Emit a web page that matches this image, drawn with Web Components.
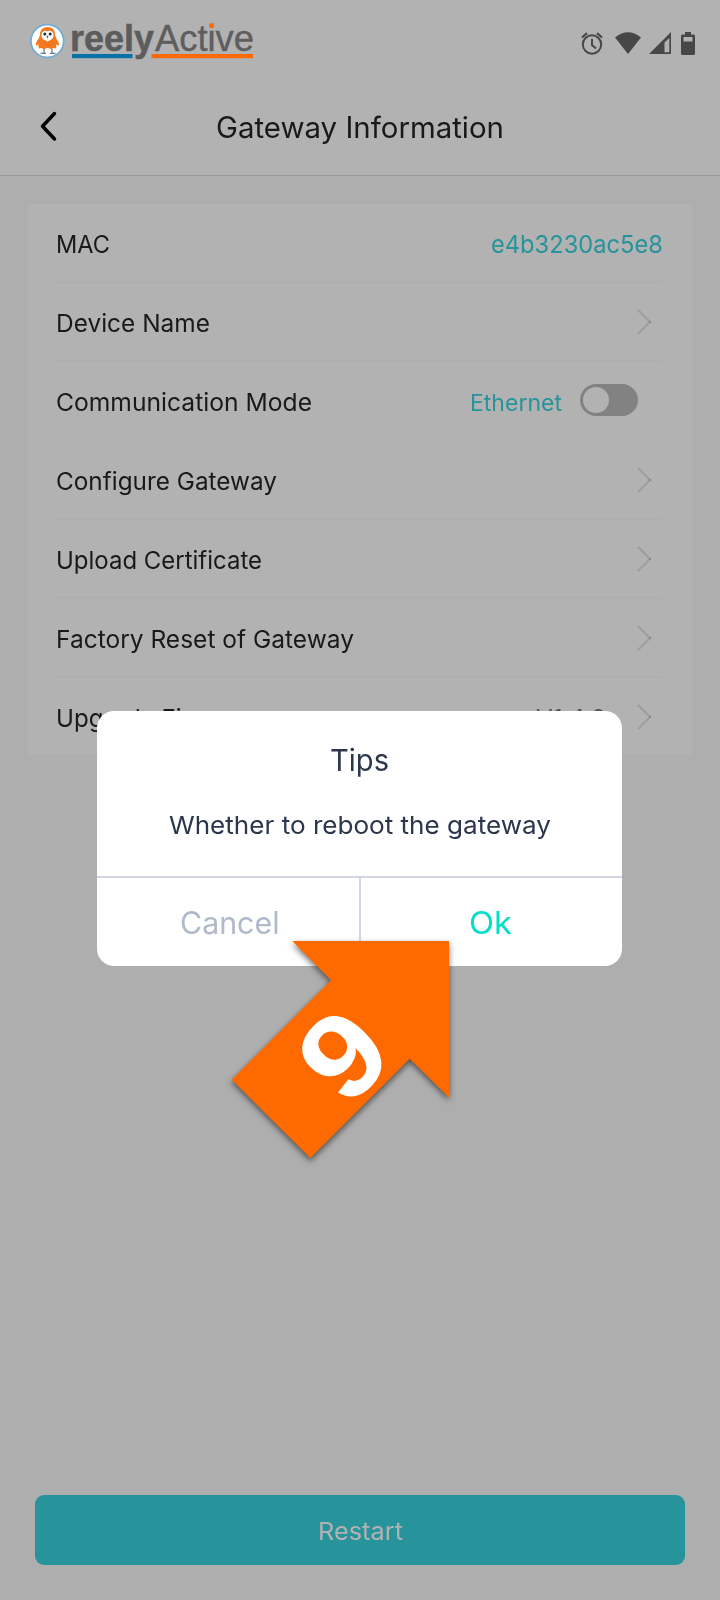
<!DOCTYPE html>
<html lang="en">
<head>
<meta charset="utf-8">
<title>Gateway Information</title>
<style>
html,body{margin:0;padding:0;background:#aeaeae}
body{font-family:Inter,"Open Sans",sans-serif;color:#191919}
</style>
</head>
<body>
<gateway-app></gateway-app>
<script>
const define = (name, html, init) => {
  const t = document.createElement('template');
  t.innerHTML = html;
  customElements.define(name, class extends HTMLElement {
    connectedCallback() {
      if (this.shadowRoot) return;
      this.attachShadow({mode: 'open'}).append(t.content.cloneNode(true));
      if (init) init.call(this, this.shadowRoot);
    }
  });
};

/* Text widened or narrowed so that its line is exactly "w" pixels wide. */
define('fit-text', `<style>:host{display:inline-block;white-space:nowrap;text-align:left;vertical-align:top}span{display:inline-block;transform-origin:0 50%}</style><span><slot></slot></span>`,
function (root) {
  const span = root.querySelector('span');
  const w = Number(this.getAttribute('w'));
  const natural = span.getBoundingClientRect().width;
  this.style.width = w + 'px';
  span.style.transform = 'scaleX(' + w / natural + ')';
  span.style.marginRight = w - natural + 'px';
});

define('brand-logo', `<style>:host{display:block}svg{display:block;overflow:visible}text{font-family:"Liberation Sans",Arial,sans-serif;font-size:36px}</style>
<svg width="230" height="50" viewBox="28 14 230 50">
  <circle cx="47.3" cy="41" r="16.4" fill="#fff" stroke="#73aed0" stroke-width="1.8"/>
  <path d="M40 35Q40 27 47.500 27T55 35L56.500 39Q59.500 43 59 45.500L56 44.500Q57 47 55.500 48.500L53 48L51 49L47.500 48L44 49L41.500 48L39 48.500Q38 46 38.500 44.500L36 45.500Q35.500 42 38.500 39Z" fill="#f4781f"/>
  <path d="M42.500 32Q45 30 47.500 31.500Q50 30 52.500 32Q55 36 51.500 39.500L47.500 41.500L43.500 39.500Q40 36 42.500 32Z" fill="#fff"/>
  <circle cx="44.800" cy="34" r="1.500" fill="#292929"/><circle cx="50.200" cy="34" r="1.500" fill="#292929"/>
  <path d="M46.500 35.800h2l-1 3.200z" fill="#665558"/>
  <path d="M44 48.500v4.500M52 48.500v4.500M40.500 53.300h5.500M50 53.300h5.500" stroke="#555" stroke-width="1" fill="none"/>
  <rect x="72" y="54" width="60.500" height="4.200" fill="#0872a8"/>
  <rect x="151.500" y="54" width="101.500" height="4.200" fill="#ff6a00"/>
  <text x="70" y="50.700" font-weight="700" fill="#5c5c5c" stroke="#5c5c5c" stroke-width=".5" textLength="84" lengthAdjust="spacingAndGlyphs">reely</text>
  <text x="155" y="50.700" fill="#5e5e5e" stroke="#5e5e5e" stroke-width=".4" textLength="99" lengthAdjust="spacingAndGlyphs">Active</text>
  <rect x="209.500" y="23.500" width="4.500" height="4.200" fill="#ff6a00"/>
</svg>`);

define('status-icons', `<style>:host{display:block}svg{display:block}</style>
<svg width="120" height="30" viewBox="578 28 120 30" fill="#474747">
  <g fill="none" stroke="#474747"><circle cx="592" cy="44.500" r="9.200" stroke-width="2"/><path d="M592 39v6l4 3.500" stroke-width="2"/><path d="M582 37.500l5-4.300M602 37.500l-5-4.300" stroke-width="2.200"/></g>
  <path d="M615 37.500Q628 27 641 37.500L628 54Z"/>
  <path d="M649 54L671 32V54Z"/><path d="M664.500 42.500L669.300 38V52.300H664.500Z" fill="#b2b2b2"/>
  <path d="M681 36q0-1.500 1.500-1.500h2.500V32h6v2.500h2.500q1.500 0 1.500 1.500v17.500q0 1.500-1.500 1.500h-11q-1.500 0-1.500-1.500z"/><path d="M683.500 37h9v4.500h-9z" fill="#b2b2b2"/>
</svg>`);

define('status-bar', `<style>:host{display:flex;justify-content:space-between;align-items:flex-start;height:64px;padding:14px 22px 0 28px;box-sizing:border-box}status-icons{margin-top:14px}</style>
<brand-logo></brand-logo><status-icons></status-icons>`);

define('title-bar', `<style>:host{display:grid;grid-template-columns:100px 1fr 100px;align-items:center;height:112px;padding-top:15px;box-sizing:border-box;border-bottom:1px solid #97979f}
svg{display:block;margin-left:38px;margin-top:-2px}h1{margin:0;font-size:29.500px;font-weight:400;line-height:40px;text-align:center}</style>
<svg width="22" height="32" viewBox="38 110 22 32"><path d="M54.500 113.500L42.500 126.300L54.500 139" fill="none" stroke="#000" stroke-width="3.500" stroke-linecap="round" stroke-linejoin="round"/></svg>
<h1><fit-text w="288">Gateway Information</fit-text></h1>`);

define('row-chevron', `<style>:host{display:block;margin-right:10px}svg{display:block}</style>
<svg width="18" height="28" viewBox="0 0 18 28"><path d="M3 2L15 14L3 26" fill="none" stroke="#9e9e9e" stroke-width="2.100"/><circle cx="15" cy="14" r="1.100" fill="#868686"/></svg>`);

define('toggle-switch', `<style>:host{display:block;box-sizing:border-box;width:58px;height:32px;border-radius:16px;background:#828282;padding:3px;margin:-2px 25px 0 18px}i{display:block;width:26px;height:26px;border-radius:50%;background:#b2b2b2}</style><i></i>`);

define('setting-row', `<style>:host{display:flex;align-items:center;height:79px;box-sizing:border-box;border-bottom:2px solid #afafaf;font-size:24.200px;line-height:34px}
:host(:last-child){border-bottom:0;height:77px}.label{flex:1;padding:4px 0 0 .5px}::slotted([slot=value]){color:#27939a;padding-top:4px}</style>
<span class="label"></span><slot name="value"></slot><slot name="control"></slot>`,
function (root) {
  const text = document.createElement('fit-text');
  text.setAttribute('w', this.getAttribute('w'));
  text.textContent = this.getAttribute('label');
  root.querySelector('.label').append(text);
});

define('settings-card', `<style>:host{display:block;background:#b2b2b2;margin:28px 28px 0;padding:0 29px 0 27px}</style><slot></slot>`);

define('primary-button', `<style>:host{display:block;margin:0 35px 35px}button{display:block;width:100%;height:70px;border:0;padding:2px 0 0;border-radius:9px;background:#27939a;color:#b2b2b2;font:400 24.500px/34px Inter,sans-serif}</style>
<button><fit-text w="85">Restart</fit-text></button>`);

define('tips-dialog', `<style>:host{position:absolute;left:97px;top:711px;width:525px;height:255px;display:flex;flex-direction:column;background:#fff;border-radius:17px;overflow:hidden;color:#2c374d;text-align:center}
h2{margin:29px 0 0;font-size:30px;line-height:40px;font-weight:400}p{margin:25px 0 0;font-size:24.800px;line-height:40px}
.actions{margin-top:auto;display:grid;grid-template-columns:262px 1fr;border-top:2px solid #d2d6e3;height:88px}
.actions span{display:flex;align-items:center;justify-content:center;font-size:30.500px;padding-top:1px}.actions .cancel{color:#b0bacb;padding-left:4px}.actions .ok{color:#00dfc9;border-left:2px solid #d2d6e3;padding-right:2px}</style>
<h2><fit-text w="59">Tips</fit-text></h2><p><fit-text w="382">Whether to reboot the gateway</fit-text></p>
<div class="actions"><span class="cancel"><fit-text w="99.500">Cancel</fit-text></span><span class="ok"><fit-text w="43">Ok</fit-text></span></div>`);

/* Numbered step arrow laid over the dialog. */
define('step-arrow', `<style>:host{position:absolute;left:222px;top:931px}svg{display:block;overflow:visible}path{filter:drop-shadow(0 3px 3px rgba(0,0,0,.55))}</style>
<svg width="240" height="240" viewBox="222 931 240 240"><path d="M292.300 941H449V1097.500L409.700 1058.800L310.300 1158L231.700 1079.700L331 980.300Z" fill="#ff6a00"/>
<text transform="translate(343 1055) rotate(-45) scale(1.1 1)" x="0" y="41" text-anchor="middle" font-family="Liberation Sans,sans-serif" font-weight="700" font-size="118" fill="#fff">9</text></svg>`);

define('gateway-app', `<style>:host{display:flex;flex-direction:column;position:relative;width:720px;height:1600px;overflow:hidden;background:#aeaeae}
header{background:#b2b2b2}main{flex:1}</style>
<header><status-bar></status-bar><title-bar></title-bar></header>
<main><settings-card>
<setting-row label="MAC" w="54"><fit-text slot="value" w="172">e4b3230ac5e8</fit-text></setting-row>
<setting-row label="Device Name" w="154"><row-chevron slot="control"></row-chevron></setting-row>
<setting-row label="Communication Mode" w="256"><fit-text slot="value" w="92" style="font-size:22.500px">Ethernet</fit-text><toggle-switch slot="control"></toggle-switch></setting-row>
<setting-row label="Configure Gateway" w="221"><row-chevron slot="control"></row-chevron></setting-row>
<setting-row label="Upload Certificate" w="206"><row-chevron slot="control"></row-chevron></setting-row>
<setting-row label="Factory Reset of Gateway" w="298"><row-chevron slot="control"></row-chevron></setting-row>
<setting-row label="Upgrade Firmware" w="212"><fit-text slot="value" w="70" style="font-size:24px;color:#555;margin-right:29px">V1.4.2</fit-text><row-chevron slot="control"></row-chevron></setting-row>
</settings-card></main>
<primary-button></primary-button>
<tips-dialog></tips-dialog><step-arrow></step-arrow>`);
</script>
</body>
</html>
